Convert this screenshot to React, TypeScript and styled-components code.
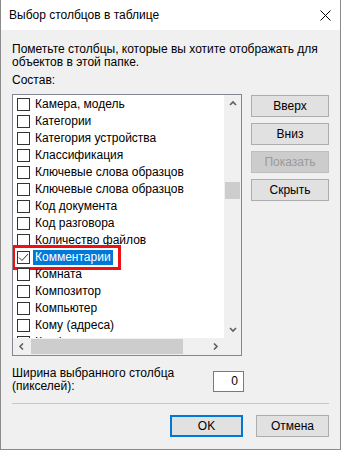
import styled, { createGlobalStyle } from 'styled-components';

const GlobalStyle = createGlobalStyle`
  html, body {
    margin: 0;
    padding: 0;
    background: #ffffff;
  }
  body {
    font-family: "Liberation Sans", Arial, sans-serif;
    font-size: 12px;
    color: #000000;
  }
`;

const Window = styled.div`
  width: 341px;
  height: 450px;
  box-sizing: border-box;
  border: 1px solid #8a8a8a;
  border-top: none;
  display: flex;
  flex-direction: column;
  background: #f0f0f0;
`;

const TitleBar = styled.div`
  height: 30px;
  flex: none;
  background: #ffffff;
  display: flex;
  align-items: center;
  justify-content: space-between;
  padding: 0 9px 0 8px;
`;

const Title = styled.span`
  font-size: 12px;
  line-height: 15px;
  white-space: nowrap;
`;

const Body = styled.div`
  flex: 1;
  padding: 13px 11px 0 11px;
  display: flex;
  flex-direction: column;
`;

const Text = styled.div`
  line-height: 13px;
  white-space: nowrap;
`;

const Caption = styled(Text)`
  margin-top: 5px;
`;

const Main = styled.div`
  display: flex;
  gap: 9px;
  margin-top: 7px;
`;

const ListBox = styled.div`
  width: 232px;
  height: 262px;
  box-sizing: border-box;
  border: 1px solid #828790;
  background: #ffffff;
  display: grid;
  grid-template-columns: 1fr 17px;
  grid-template-rows: 1fr 17px;
`;

const Items = styled.div`
  overflow: hidden;
  padding-top: 1px;
`;

const Row = styled.div`
  position: relative;
  height: 17px;
  display: flex;
  align-items: center;
  padding-left: 4px;
`;

const Check = styled.div`
  width: 13px;
  height: 13px;
  box-sizing: border-box;
  border: 1px solid #333333;
  background: #ffffff;
  flex: none;
  display: flex;
  align-items: center;
  justify-content: center;
`;

const Label = styled.span<{ selected: boolean }>`
  margin-left: 3px;
  padding: 0 2px;
  height: 15px;
  line-height: 15px;
  white-space: nowrap;
  background: ${(p) => (p.selected ? '#0078d7' : 'transparent')};
  color: ${(p) => (p.selected ? '#ffffff' : '#000000')};
`;

const Marker = styled.div`
  position: absolute;
  left: -1px;
  top: -4px;
  width: 109px;
  height: 25px;
  box-sizing: border-box;
  border: 3px solid #ee1111;
  pointer-events: none;
`;

const VScroll = styled.div`
  background: #f0f0f0;
  display: flex;
  flex-direction: column;
`;

const HScroll = styled.div`
  background: #f0f0f0;
  display: flex;
`;

const Corner = styled.div`
  background: #f0f0f0;
`;

const Arrow = styled.div`
  width: 17px;
  height: 17px;
  flex: none;
  display: flex;
  align-items: center;
  justify-content: center;
`;

const VTrack = styled.div`
  flex: 1;
  padding-top: 70px;
`;

const VThumb = styled.div`
  height: 17px;
  margin: 0 1px;
  background: #cdcdcd;
`;

const HTrack = styled.div`
  flex: 1;
  padding-left: 1px;
  display: flex;
  align-items: center;
`;

const HThumb = styled.div`
  width: 152px;
  height: 15px;
  background: #cdcdcd;
`;

const SideButtons = styled.div`
  display: flex;
  flex-direction: column;
  gap: 6px;
  padding-top: 1px;
`;

const Button = styled.button<{ wide?: boolean; primary?: boolean }>`
  width: ${(p) => (p.wide ? '78px' : '73px')};
  height: 22px;
  box-sizing: border-box;
  margin: 0;
  padding: 0;
  font-family: inherit;
  font-size: 12px;
  color: #000000;
  background: #e1e1e1;
  border: ${(p) => (p.primary ? '2px solid #0078d7' : '1px solid #adadad')};
  &:disabled {
    background: #cccccc;
    border-color: #bfbfbf;
    color: #9a9a9a;
  }
`;

const WidthRow = styled.div`
  width: 232px;
  display: flex;
  justify-content: space-between;
  align-items: flex-start;
  margin-top: 11px;
`;

const NumberBox = styled.div`
  width: 31px;
  height: 21px;
  margin-top: 4px;
  box-sizing: border-box;
  border: 1px solid #7a7a7a;
  background: #ffffff;
  text-align: right;
  padding-right: 5px;
  line-height: 19px;
`;

const Separator = styled.div`
  height: 1px;
  background: #c8c8c8;
  margin-top: 10px;
`;

const Footer = styled.div`
  display: flex;
  justify-content: flex-end;
  gap: 13px;
  margin-top: 11px;
`;

const Chevron = ({ dir }: { dir: 'up' | 'down' | 'left' | 'right' }) => {
  const d = {
    up: 'M1 5 L4 2 L7 5',
    down: 'M1 2 L4 5 L7 2',
    left: 'M5 0.5 L2 3.5 L5 6.5',
    right: 'M2 0.5 L5 3.5 L2 6.5',
  }[dir];
  const horiz = dir === 'left' || dir === 'right';
  return (
    <svg width={horiz ? 7 : 8} height={7} viewBox={horiz ? '0 0 7 7' : '0 0 8 7'}>
      <path d={d} fill="none" stroke="#606060" strokeWidth="1.6" />
    </svg>
  );
};

const columns = [
  'Камера, модель',
  'Категории',
  'Категория устройства',
  'Классификация',
  'Ключевые слова образцов',
  'Ключевые слова образцов',
  'Код документа',
  'Код разговора',
  'Количество файлов',
  'Комментарии',
  'Комната',
  'Композитор',
  'Компьютер',
  'Кому (адреса)',
  'Конфиденциальность',
];

const selectedIndex = 9;

export default function App() {
  return (
    <>
      <GlobalStyle />
      <Window>
        <TitleBar>
          <Title>Выбор столбцов в таблице</Title>
          <svg width="11" height="11" viewBox="0 0 11 11">
            <path d="M0.5 0.5 L10.5 10.5 M10.5 0.5 L0.5 10.5" stroke="#000" strokeWidth="1" />
          </svg>
        </TitleBar>
        <Body>
          <Text>
            Пометьте столбцы, которые вы хотите отображать для
            <br />
            объектов в этой папке.
          </Text>
          <Caption>Состав:</Caption>
          <Main>
            <ListBox>
              <Items>
                {columns.map((name, i) => (
                  <Row key={i}>
                    <Check>
                      {i === selectedIndex && (
                        <svg width="11" height="11" viewBox="0 0 11 11">
                          <path d="M1 5.5 L4 8.5 L10 2" fill="none" stroke="#333" strokeWidth="1" />
                        </svg>
                      )}
                    </Check>
                    <Label selected={i === selectedIndex}>{name}</Label>
                    {i === selectedIndex && <Marker />}
                  </Row>
                ))}
              </Items>
              <VScroll>
                <Arrow>
                  <Chevron dir="up" />
                </Arrow>
                <VTrack>
                  <VThumb />
                </VTrack>
                <Arrow>
                  <Chevron dir="down" />
                </Arrow>
              </VScroll>
              <HScroll>
                <Arrow>
                  <Chevron dir="left" />
                </Arrow>
                <HTrack>
                  <HThumb />
                </HTrack>
                <Arrow>
                  <Chevron dir="right" />
                </Arrow>
              </HScroll>
              <Corner />
            </ListBox>
            <SideButtons>
              <Button wide>Вверх</Button>
              <Button wide>Вниз</Button>
              <Button wide disabled>
                Показать
              </Button>
              <Button wide>Скрыть</Button>
            </SideButtons>
          </Main>
          <WidthRow>
            <Text>
              Ширина выбранного столбца
              <br />
              (пикселей):
            </Text>
            <NumberBox>0</NumberBox>
          </WidthRow>
          <Separator />
          <Footer>
            <Button primary>OK</Button>
            <Button>Отмена</Button>
          </Footer>
        </Body>
      </Window>
    </>
  );
}
